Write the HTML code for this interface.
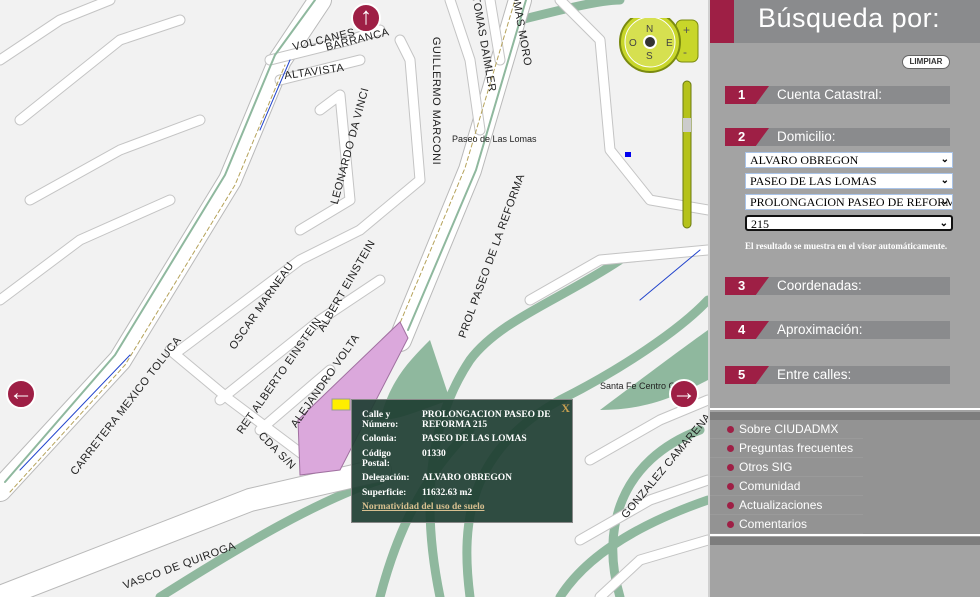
<!DOCTYPE html>
<html><head><meta charset="utf-8"><style>
*{margin:0;padding:0;box-sizing:border-box}
body{width:980px;height:597px;overflow:hidden;background:#f2f2f2;font-family:"Liberation Sans",sans-serif;position:relative}
#map{position:absolute;left:0;top:0;width:708px;height:597px;overflow:hidden;background:#f2f2f2}
#panel{position:absolute;left:708px;top:0;width:272px;height:597px;background:#a3a3a3;border-left:2px solid #d0d0d0}
.hdr{position:absolute;left:0;top:0;width:272px;height:43px;background:#8a8b8d}
.hdr .red{position:absolute;left:0;top:0;width:24px;height:43px;background:#9e1f45}
.hdr span{position:absolute;left:48px;top:3px;color:#fff;font-size:27px;letter-spacing:.5px}
.limp{position:absolute;left:192px;top:55px;width:48px;height:14px;background:#fff;border:1px solid #666;border-radius:8px;font-size:8px;font-weight:bold;text-align:center;line-height:12px;color:#333}
.sec{position:absolute;left:15px;width:225px;height:18px;background:#8a8b8d}
.sec .n{position:absolute;left:0;top:0;width:44px;height:18px;background:#9e1f45;clip-path:polygon(0 0,100% 0,70% 100%,0 100%);color:#fff;font-weight:bold;font-size:13px;padding-left:13px;line-height:18px}
.sec .t{position:absolute;left:52px;top:0;color:#fff;font-size:13.5px;line-height:18px}
.sel{position:absolute;left:35px;width:208px;height:16px;background:#fff;border:1px solid #aac4e8;font-family:"Liberation Serif",serif;font-size:12px;line-height:14px;padding-left:4px;color:#000;white-space:nowrap;overflow:hidden}
.sel b{position:absolute;right:3px;top:0;font-size:10px}
.menu{position:absolute;left:0;top:420px;width:270px;height:114px;background:#939393}
.menu div{height:19px;color:#fff;font-size:12px;line-height:19px;padding-left:29px;position:relative;border-bottom:1px solid #9a9a9a;width:153px}
.menu div:before{content:"";position:absolute;left:17px;top:6px;width:7px;height:7px;border-radius:50%;background:#9e1f45}
.lbl{position:absolute;font-size:11px;color:#222;white-space:nowrap;letter-spacing:.5px}
.pop{position:absolute;left:351px;top:399px;width:222px;height:124px;background:rgba(30,62,50,.92);border:1px solid #888;color:#fff;font-family:"Liberation Serif",serif;font-size:9.5px;font-weight:bold}
.pop .k{position:absolute;left:10px}
.pop .v{position:absolute;left:70px;width:140px;line-height:10px}
.circ{position:absolute;width:30px;height:30px;border-radius:50%;background:#9e1f45;border:2px solid #fff;color:#fff;text-align:center;font-size:24px;line-height:24px;font-weight:bold}
</style></head><body>
<div id="map">
<svg width="708" height="597" viewBox="0 0 708 597">
<g fill="none" stroke-linecap="round" stroke-linejoin="round">
<g stroke="#8fb89e" stroke-width="9">
<path d="M470 597 C460 520 470 450 560 400 C620 370 680 330 708 300"/>
<path d="M440 597 C420 500 430 420 470 360 C500 320 560 300 620 260"/>
<path d="M380 597 C400 520 430 470 470 430"/>
<path d="M620 597 C600 530 620 460 700 430"/>
<path d="M520 20 C560 10 600 0 620 0"/>
<path d="M560 597 C590 550 650 520 708 500"/>
<path d="M160 597 C250 540 320 500 380 480"/>
</g>
<path d="M380 420 C390 380 410 360 430 340 L450 400 C420 410 400 420 380 420Z" fill="#8fb89e" stroke="none"/>
<path d="M600 410 C640 380 680 350 708 330 L708 380 C670 400 640 410 600 410Z" fill="#8fb89e" stroke="none"/>
<g stroke="#b9b9b9" stroke-width="24">
<path d="M0 490 L120 360 L230 180 L280 60 L320 0"/>
<path d="M400 340 L470 170 L520 0"/>
<path d="M0 597 L250 500 L380 470"/>
</g>
<g stroke="#fff" stroke-width="22">
<path d="M0 490 L120 360 L230 180 L280 60 L320 0"/>
<path d="M400 340 L470 170 L520 0"/>
<path d="M0 597 L250 500 L380 470"/>
</g>
<g stroke="#c4c4c4" stroke-width="11">
<path d="M270 60 L350 40 L380 30"/><path d="M280 80 L360 60"/>
<path d="M320 110 L340 95 L350 200 L300 230"/>
<path d="M400 40 L410 60 L420 180 L360 230"/>
<path d="M450 0 L470 60 L480 130"/><path d="M490 0 L500 60"/>
<path d="M180 350 L300 260 L360 230"/>
<path d="M220 400 L320 320 L380 280"/>
<path d="M260 430 L330 370"/>
<path d="M170 350 L230 400 L310 460"/>
<path d="M560 0 L600 40 L610 150 L650 200 L708 210"/>
<path d="M530 300 L600 260 L708 250"/>
<path d="M590 460 L660 420 L708 400"/>
<path d="M580 540 L650 500 L708 480"/>
<path d="M0 60 L60 20 L110 0"/><path d="M20 120 L120 40 L180 20"/>
<path d="M0 300 L80 240 L170 200"/><path d="M30 200 L120 150 L200 120"/>
<path d="M600 597 L640 560 L708 540"/>
</g>
<g stroke="#fff" stroke-width="9">
<path d="M270 60 L350 40 L380 30"/><path d="M280 80 L360 60"/>
<path d="M320 110 L340 95 L350 200 L300 230"/>
<path d="M400 40 L410 60 L420 180 L360 230"/>
<path d="M450 0 L470 60 L480 130"/><path d="M490 0 L500 60"/>
<path d="M180 350 L300 260 L360 230"/>
<path d="M220 400 L320 320 L380 280"/>
<path d="M260 430 L330 370"/>
<path d="M170 350 L230 400 L310 460"/>
<path d="M560 0 L600 40 L610 150 L650 200 L708 210"/>
<path d="M530 300 L600 260 L708 250"/>
<path d="M590 460 L660 420 L708 400"/>
<path d="M580 540 L650 500 L708 480"/>
<path d="M0 60 L60 20 L110 0"/><path d="M20 120 L120 40 L180 20"/>
<path d="M0 300 L80 240 L170 200"/><path d="M30 200 L120 150 L200 120"/>
<path d="M600 597 L640 560 L708 540"/>
</g>
<g stroke="#8fb89e" stroke-width="2"><path d="M5 482 L115 355 L225 175 L275 55 L315 0"/><path d="M408 330 L476 170 L526 0"/></g>
<g stroke="#b5a25a" stroke-width="1" stroke-dasharray="4 3"><path d="M10 492 L125 365 L235 185 L285 65"/><path d="M395 335 L465 168 L515 0"/></g>
<g stroke="#2244cc" stroke-width="1"><path d="M20 470 L130 355"/><path d="M260 130 L290 60"/><path d="M640 300 L700 250"/></g>
</g>
<path d="M298 420 L400 322 L408 338 L340 470 L300 475Z" fill="#dba8dc" stroke="#a070a0"/>
<rect x="332" y="399" width="18" height="11" fill="#ffee00" stroke="#999"/>
<rect x="625" y="152" width="6" height="5" fill="#0000ee"/>
</svg>
<div class="lbl" style="left:292px;top:34px;transform:rotate(-14deg)">VOLCANES</div>
<div class="lbl" style="left:325px;top:34px;transform:rotate(-14deg)">BARRANCA</div>
<div class="lbl" style="left:284px;top:66px;transform:rotate(-8deg)">ALTAVISTA</div>
<div class="lbl" style="left:372px;top:95px;transform:rotate(90deg)">GUILLERMO MARCONI</div>
<div class="lbl" style="left:435px;top:38px;transform:rotate(80deg)">TOMAS DAIMLER</div>
<div class="lbl" style="left:480px;top:20px;transform:rotate(80deg)">TOMAS MORO</div>
<div class="lbl" style="left:290px;top:140px;transform:rotate(-75deg)">LEONARDO DA VINCI</div>
<div class="lbl" style="left:452px;top:134px;font-size:9px;letter-spacing:0">Paseo de Las Lomas</div>
<div class="lbl" style="left:405px;top:250px;transform:rotate(-70deg)">PROL PASEO DE LA REFORMA</div>
<div class="lbl" style="left:210px;top:300px;transform:rotate(-55deg)">OSCAR MARNEAU</div>
<div class="lbl" style="left:295px;top:280px;transform:rotate(-60deg)">ALBERT EINSTEIN</div>
<div class="lbl" style="left:210px;top:370px;transform:rotate(-55deg)">RET ALBERTO EINSTEIN</div>
<div class="lbl" style="left:270px;top:375px;transform:rotate(-55deg)">ALEJANDRO VOLTA</div>
<div class="lbl" style="left:40px;top:400px;transform:rotate(-52deg)">CARRETERA MEXICO TOLUCA</div>
<div class="lbl" style="left:253px;top:445px;transform:rotate(45deg)">CDA S/N</div>
<div class="lbl" style="left:120px;top:560px;transform:rotate(-20deg)">VASCO DE QUIROGA</div>
<div class="lbl" style="left:600px;top:460px;transform:rotate(-50deg)">GONZALEZ CAMARENA</div>
<div class="lbl" style="left:600px;top:381px;font-size:9px;letter-spacing:0">Santa Fe Centro Ci</div>
<div class="circ" style="left:351px;top:3px">&#8593;</div>
<div class="circ" style="left:6px;top:379px">&#8592;</div>
<div class="circ" style="left:669px;top:379px">&#8594;</div>
<svg style="position:absolute;left:616px;top:18px" width="84" height="215">
<rect x="60" y="2" width="22" height="42" rx="6" fill="#c8d62a" stroke="#7a8a10"/>
<text x="67" y="16" font-size="12" fill="#555">+</text><text x="67" y="38" font-size="12" fill="#555">-</text>
<circle cx="34" cy="24" r="30" fill="#c8d62a" stroke="#7a8a10" stroke-width="2"/>
<circle cx="34" cy="24" r="25" fill="#d6e050" stroke="#fff"/>
<circle cx="34" cy="24" r="6" fill="#333" stroke="#fff" stroke-width="2"/>
<text x="30" y="14" font-size="10" fill="#444">N</text><text x="30" y="41" font-size="10" fill="#444">S</text>
<text x="13" y="28" font-size="10" fill="#444">O</text><text x="50" y="28" font-size="10" fill="#444">E</text>
<rect x="67" y="63" width="8" height="147" rx="4" fill="#b5c21a" stroke="#6a7a10"/>
<rect x="67" y="100" width="8" height="14" fill="#ccc"/>
</svg>
<div class="pop">
<div style="position:absolute;right:2px;top:1px;color:#c8a050;font-size:12px">X</div>
<div class="k" style="top:10px;line-height:10px">Calle y<br>Número:</div><div class="v" style="top:10px">PROLONGACION PASEO DE REFORMA 215</div>
<div class="k" style="top:34px">Colonia:</div><div class="v" style="top:34px">PASEO DE LAS LOMAS</div>
<div class="k" style="top:49px;line-height:10px">Código<br>Postal:</div><div class="v" style="top:49px">01330</div>
<div class="k" style="top:73px">Delegación:</div><div class="v" style="top:73px">ALVARO OBREGON</div>
<div class="k" style="top:88px">Superficie:</div><div class="v" style="top:88px">11632.63 m2</div>
<div class="k" style="top:102px;color:#d8c090;text-decoration:underline">Normatividad del uso de suelo</div>
</div>
</div>
<div id="panel">
<div class="hdr"><div class="red"></div><span>Búsqueda por:</span></div>
<div class="limp">LIMPIAR</div>
<div class="sec" style="top:86px"><div class="n">1</div><div class="t">Cuenta Catastral:</div></div>
<div class="sec" style="top:128px"><div class="n">2</div><div class="t">Domicilio:</div></div>
<div class="sel" style="top:152px">ALVARO OBREGON<b>&#8964;</b></div>
<div class="sel" style="top:173px">PASEO DE LAS LOMAS<b>&#8964;</b></div>
<div class="sel" style="top:194px">PROLONGACION PASEO DE REFORMA<b>&#8964;</b></div>
<div class="sel" style="top:215px;border:2px solid #111;border-radius:3px">215<b>&#8964;</b></div>
<div style="position:absolute;left:35px;top:241px;color:#fff;font-family:'Liberation Serif',serif;font-size:9px;font-weight:bold">El resultado se muestra en el visor automáticamente.</div>
<div class="sec" style="top:277px"><div class="n">3</div><div class="t">Coordenadas:</div></div>
<div class="sec" style="top:321px"><div class="n">4</div><div class="t">Aproximación:</div></div>
<div class="sec" style="top:366px"><div class="n">5</div><div class="t">Entre calles:</div></div>
<div style="position:absolute;left:0;top:408px;width:270px;height:2px;background:#fff"></div>
<div style="position:absolute;left:0;top:412px;width:270px;height:8px;background:#7d7d7d"></div>
<div class="menu"><div>Sobre CIUDADMX</div><div>Preguntas frecuentes</div><div>Otros SIG</div><div>Comunidad</div><div>Actualizaciones</div><div>Comentarios</div></div>
<div style="position:absolute;left:0;top:534px;width:270px;height:2px;background:#fff"></div>
<div style="position:absolute;left:0;top:537px;width:270px;height:8px;background:#7d7d7d"></div>
</div>
</body></html>
